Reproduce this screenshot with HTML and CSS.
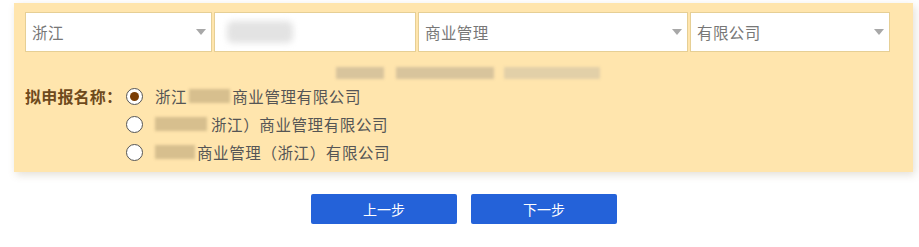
FILE: index.html
```html
<!DOCTYPE html>
<html lang="zh">
<head>
<meta charset="utf-8">
<link rel="stylesheet" href="styles.css">
</head>
<body>
<div class="panel">
  <div class="selects">
    <div class="sel w1"><span class="val">浙江</span><span class="arrow"></span></div>
    <div class="sel w2"><span class="blur-input"></span></div>
    <div class="sel w3"><span class="val">商业管理</span><span class="arrow"></span></div>
    <div class="sel w4"><span class="val">有限公司</span><span class="arrow"></span></div>
  </div>
  <div class="hint">
    <span class="hb b1"></span><span class="hb b2"></span><span class="hb b3"></span>
  </div>
  <div class="names">
    <div class="label">拟申报名称：</div>
    <div class="options">
      <div class="opt"><span class="radio checked"></span><span class="txt">浙江<span class="mask m1"></span>商业管理有限公司</span></div>
      <div class="opt"><span class="radio"></span><span class="txt"><span class="mask m2"></span>浙江）商业管理有限公司</span></div>
      <div class="opt"><span class="radio"></span><span class="txt"><span class="mask m3"></span>商业管理（浙江）有限公司</span></div>
    </div>
  </div>
</div>
<div class="actions">
  <button class="btn">上一步</button>
  <button class="btn">下一步</button>
</div>
</body>
</html>
```
FILE: styles.css
```css
html, body {
  margin: 0;
  padding: 0;
  background: #ffffff;
  font-family: "Noto Sans CJK SC", "Noto Sans", sans-serif;
}
.panel {
  margin: 3px 0 0 14px;
  width: 888px;
  height: 160px;
  padding: 9px 0 0 11px;
  background: #ffe5ad;
  box-shadow: 2px 3px 8px rgba(120, 100, 60, 0.2);
}
.selects {
  display: flex;
  gap: 2px;
}
.sel {
  position: relative;
  box-sizing: border-box;
  height: 40px;
  background: #fff;
  border: 1px solid #e6cf95;
  display: flex;
  align-items: center;
  padding-left: 6px;
}
.w1 { width: 187px; }
.w2 { width: 202px; }
.w3 { width: 270px; }
.w4 { width: 200px; }
.val {
  font-size: 15.5px;
  color: #777;
  letter-spacing: 0.4px;
}
.arrow {
  position: absolute;
  right: 5px;
  top: 16px;
  width: 0;
  height: 0;
  border-left: 5px solid transparent;
  border-right: 5px solid transparent;
  border-top: 6px solid #a8a8a8;
}
.blur-input {
  display: block;
  width: 66px;
  height: 22px;
  margin-left: 6px;
  background: #e3e3e3;
  border-radius: 6px;
  filter: blur(3px);
}
.hint {
  display: flex;
  height: 12px;
  margin: 15px 0 0 311px;
}
.hb {
  display: block;
  height: 12px;
  background: #d8c49c;
  filter: blur(1.5px);
}
.b1 { width: 48px; }
.b2 { width: 98px; margin-left: 12px; }
.b3 { width: 96px; margin-left: 10px; background: #e2d0a8; }
.names {
  display: flex;
  margin-top: 3px;
}
.label {
  width: 101px;
  font-size: 16px;
  font-weight: bold;
  color: #6e4a1c;
  line-height: 28px;
  letter-spacing: 0.2px;
}
.options {
  display: flex;
  flex-direction: column;
}
.opt {
  display: flex;
  align-items: center;
  height: 28px;
}
.radio {
  box-sizing: border-box;
  width: 17px;
  height: 17px;
  border: 1.5px solid #555;
  border-radius: 50%;
  background: #fff;
  display: flex;
  align-items: center;
  justify-content: center;
}
.radio.checked::after {
  content: "";
  width: 9px;
  height: 9px;
  border-radius: 50%;
  background: #7a3e06;
}
.txt {
  margin-left: 12px;
  font-size: 15.5px;
  color: #555;
  letter-spacing: 0.6px;
  display: flex;
  align-items: center;
}
.mask {
  display: inline-block;
  height: 14px;
  background: #d7bf8e;
  filter: blur(1.5px);
}
.m1 { width: 41px; margin: 0 2px; }
.m2 { width: 52px; margin-right: 4px; }
.m3 { width: 40px; margin-right: 2px; }
.actions {
  display: flex;
  justify-content: center;
  gap: 14px;
  margin-top: 22px;
  padding-left: 9px;
}
.btn {
  width: 146px;
  height: 30px;
  border: none;
  border-radius: 2px;
  background: #2462d9;
  color: #fff;
  font-family: "Noto Sans CJK SC", sans-serif;
  font-size: 14px;
  padding: 0;
}
```
